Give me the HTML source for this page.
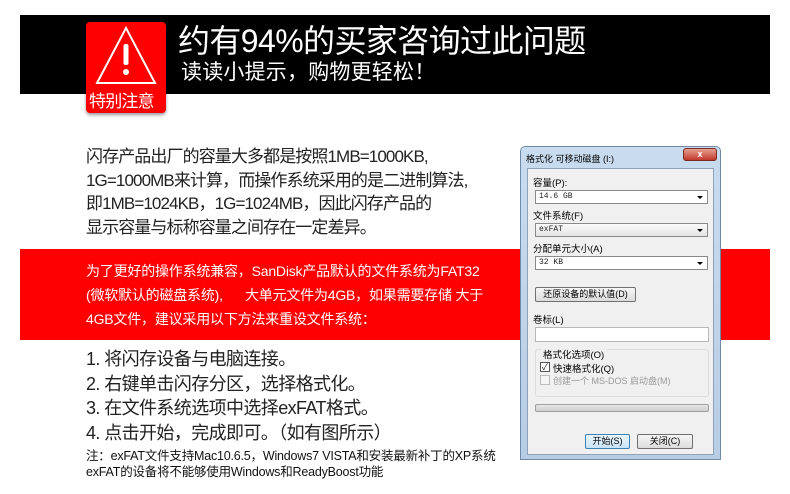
<!DOCTYPE html>
<html><head><meta charset="utf-8"><style>
*{margin:0;padding:0;box-sizing:border-box}
body{width:790px;height:494px;background:#fff;position:relative;overflow:hidden;font-family:"Liberation Sans","Noto Sans CJK SC",sans-serif;color:#222}
.a{position:absolute;white-space:nowrap}
.black{left:20px;top:15px;width:750px;height:79px;background:#000}
.badge{left:86px;top:22px;width:80px;height:91px;background:#ff0000;border-radius:4px;box-shadow:0 2px 3px rgba(0,0,0,.4)}
.t1{left:178px;top:21px;font-size:32px;color:#fff;letter-spacing:-0.6px;line-height:40px}
.t2{left:181px;top:59px;font-size:21px;color:#fff;line-height:28px;letter-spacing:0.2px}
.p1{left:86px;top:145px;font-size:17px;line-height:23.5px;letter-spacing:-0.9px;color:#222}
.red{left:20px;top:249px;width:750px;height:91px;background:#ff0000}
.rt{left:86px;top:259px;font-size:14px;line-height:24px;color:#fff;letter-spacing:-0.2px}
.st{left:86px;top:347px;font-size:18px;line-height:24.5px;letter-spacing:-0.6px;color:#222}
.nt{left:86px;top:449px;font-size:12.5px;line-height:15.5px;letter-spacing:-0.2px;color:#111}
.dlg{left:520px;top:146px;width:201px;height:314px;background:linear-gradient(#c9dcef,#b7cde4);border:1px solid #6f8aa6;border-radius:5px 5px 0 0}
.in{position:absolute;left:6px;top:21px;width:187px;height:287px;background:#f0f0f0;border:1px solid #8ea3ba}
.f{font-size:9.5px;color:#000;font-family:"Liberation Sans","Noto Sans CJK SC",sans-serif}
.cb{position:absolute;left:7px;width:173px;height:14px;background:#fff;border:1px solid #8a8a8a;font-size:8px;font-family:"Liberation Mono",monospace;padding-left:3px;line-height:12px}
.cb:after{content:"";position:absolute;right:4px;top:5px;border:3px solid transparent;border-top:3px solid #000}
.btn{position:absolute;height:15px;border:1px solid #707070;border-radius:2px;background:linear-gradient(#f6f6f6,#dcdcdc);font-size:9px;text-align:center;line-height:13px}
</style></head><body>
<div class="a black"></div>
<div class="a badge">
<svg width="80" height="91" style="position:absolute;left:0;top:0">
<polygon points="40,6 69,61 11,61" fill="none" stroke="#fff" stroke-width="2"/>
<rect x="37.5" y="22" width="5" height="21" rx="2" fill="#fff"/>
<circle cx="40" cy="50" r="3" fill="#fff"/>
</svg>
<div class="a" style="left:3px;top:65px;font-size:17px;color:#fff;letter-spacing:-0.8px">特别注意</div>
</div>
<div class="a t1">约有94%的买家咨询过此问题</div>
<div class="a t2">读读小提示，购物更轻松！</div>
<div class="a p1">闪存产品出厂的容量大多都是按照1MB=1000KB,<br>1G=1000MB来计算，而操作系统采用的是二进制算法,<br>即1MB=1024KB，1G=1024MB，因此闪存产品的<br>显示容量与标称容量之间存在一定差异。</div>
<div class="a red"></div>
<div class="a rt">为了更好的操作系统兼容，SanDisk产品默认的文件系统为FAT32<br>(微软默认的磁盘系统),&nbsp;&nbsp;&nbsp;&nbsp;&nbsp;&nbsp;大单元文件为4GB，如果需要存储 大于<br>4GB文件，建议采用以下方法来重设文件系统：</div>
<div class="a st">1. 将闪存设备与电脑连接。<br>2. 右键单击闪存分区，选择格式化。<br>3. 在文件系统选项中选择exFAT格式。<br>4. 点击开始，完成即可。（如有图所示）</div>
<div class="a nt">注：exFAT文件支持Mac10.6.5，Windows7 VISTA和安装最新补丁的XP系统<br>exFAT的设备将不能够使用Windows和ReadyBoost功能</div>
<div class="a dlg">
<div class="a f" style="left:5px;top:5px;font-size:9px">格式化 可移动磁盘 (I:)</div>
<div class="a" style="left:162px;top:1px;width:34px;height:13px;background:linear-gradient(#e8a092,#c0392b);border:1px solid #7a2a20;border-radius:3px;color:#fff;font-size:9px;text-align:center;line-height:11px;font-weight:bold">x</div>
<div class="in">
<div class="a f" style="left:5px;top:6px">容量(P):</div>
<div class="cb" style="top:21px">14.6 GB</div>
<div class="a f" style="left:5px;top:39px">文件系统(F)</div>
<div class="cb" style="top:54px;background:linear-gradient(#fafafa,#e4e4e4)">exFAT</div>
<div class="a f" style="left:5px;top:72px">分配单元大小(A)</div>
<div class="cb" style="top:87px">32 KB</div>
<div class="btn f" style="left:7px;top:118px;width:101px">还原设备的默认值(D)</div>
<div class="a f" style="left:5px;top:143px">卷标(L)</div>
<div class="a" style="left:7px;top:158px;width:174px;height:15px;background:#fff;border:1px solid #b8b8b8"></div>
<div class="a" style="left:7px;top:180px;width:174px;height:48px;border:1px solid #dcdcdc;border-radius:3px"></div>
<div class="a f" style="left:13px;top:178px;background:#f0f0f0;padding:0 2px">格式化选项(O)</div>
<div class="a" style="left:12px;top:193px;width:10px;height:10px;border:1px solid #555;background:#fff;font-size:9px;line-height:8px;text-align:center;color:#223">✓</div>
<div class="a f" style="left:25px;top:192px">快速格式化(Q)</div>
<div class="a" style="left:12px;top:206px;width:10px;height:10px;border:1px solid #bbb;background:#f4f4f4"></div>
<div class="a f" style="left:25px;top:205px;color:#999;font-size:9px">创建一个 MS-DOS 启动盘(M)</div>
<div class="a" style="left:7px;top:235px;width:174px;height:8px;border:1px solid #a0a0a0;border-radius:2px;background:linear-gradient(#e6e6e6,#cfcfcf)"></div>
<div class="btn f" style="left:57px;top:265px;width:45px;border-color:#3c7fb1;background:linear-gradient(#eaf6fd,#c8e4f6)">开始(S)</div>
<div class="btn f" style="left:109px;top:265px;width:56px">关闭(C)</div>
</div>
</div>
</body></html>
